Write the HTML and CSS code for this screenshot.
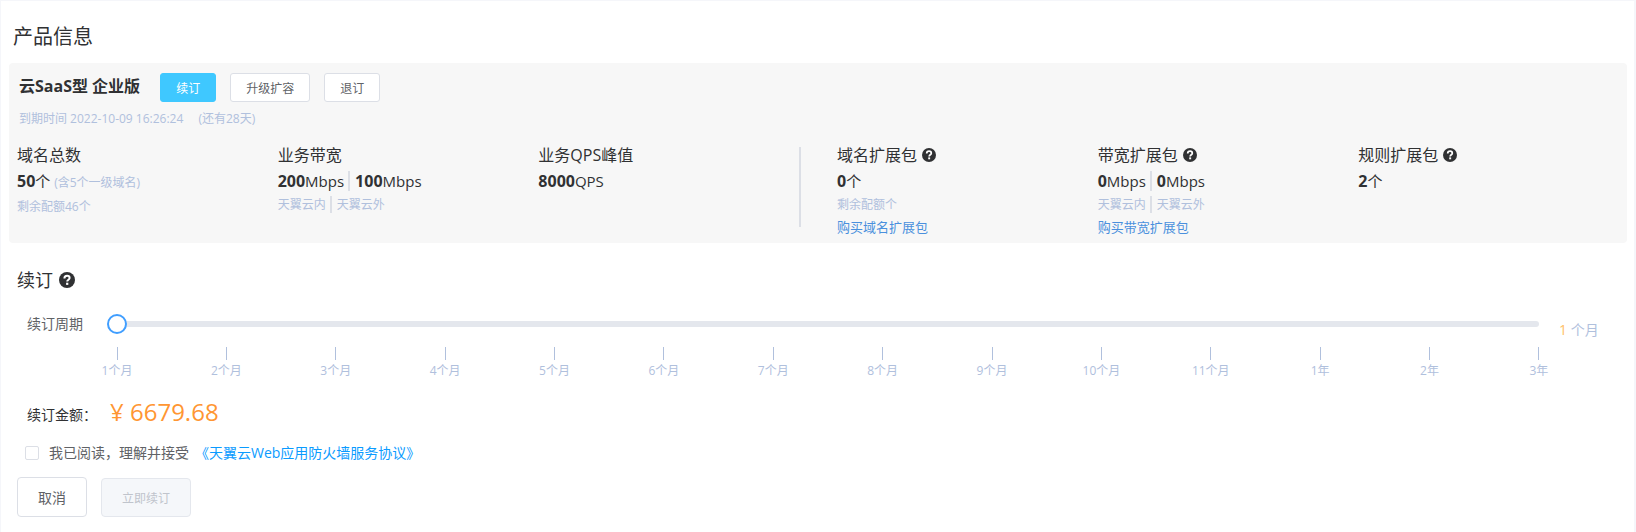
FILE: index.html
```html
<!DOCTYPE html>
<html lang="zh-CN">
<head>
  <meta charset="UTF-8">
  <meta name="viewport" content="width=device-width, initial-scale=1.0">
  <title>产品信息</title>
  <link rel="stylesheet" href="styles.css">
</head>
<body>
  <svg class="sprite" aria-hidden="true">
    <symbol id="icon-help" viewBox="0 0 16 16">
      <circle cx="8" cy="8" r="8" fill="#303133"/>
      <path d="M5.4 6.4C5.4 4.6 6.5 3.7 8.1 3.7s2.5.9 2.5 2.2c0 1.8-2.4 1.8-2.4 3.7" fill="none" stroke="#fff" stroke-width="2"/>
      <rect x="7.1" y="10.7" width="2.2" height="2.2" fill="#fff"/>
    </symbol>
  </svg>

  <main class="page">
    <h1>产品信息</h1>

    <section class="panel">
      <div class="panel-head">
        <h2>云SaaS型 企业版</h2>
        <button class="btn btn-primary" type="button">续订</button>
        <button class="btn" type="button">升级扩容</button>
        <button class="btn" type="button">退订</button>
      </div>
      <p class="expire">到期时间 2022-10-09 16:26:24 <span>(还有28天)</span></p>

      <div class="stats">
        <div class="group">
          <div class="stat">
            <h3>域名总数</h3>
            <p class="value"><b>50</b>个 <small>(含5个一级域名)</small></p>
            <p class="sub">剩余配额46个</p>
          </div>
          <div class="stat">
            <h3>业务带宽</h3>
            <p class="value"><span><b>200</b>Mbps</span><span><b>100</b>Mbps</span></p>
            <p class="sub"><span>天翼云内</span><span>天翼云外</span></p>
          </div>
          <div class="stat">
            <h3>业务QPS峰值</h3>
            <p class="value"><b>8000</b>QPS</p>
          </div>
        </div>
        <div class="divider"></div>
        <div class="group">
          <div class="stat">
            <h3>域名扩展包 <svg class="help"><use href="#icon-help"/></svg></h3>
            <p class="value"><b>0</b>个</p>
            <p class="sub">剩余配额个</p>
            <a href="#">购买域名扩展包</a>
          </div>
          <div class="stat">
            <h3>带宽扩展包 <svg class="help"><use href="#icon-help"/></svg></h3>
            <p class="value"><span><b>0</b>Mbps</span><span><b>0</b>Mbps</span></p>
            <p class="sub"><span>天翼云内</span><span>天翼云外</span></p>
            <a href="#">购买带宽扩展包</a>
          </div>
          <div class="stat">
            <h3>规则扩展包 <svg class="help"><use href="#icon-help"/></svg></h3>
            <p class="value"><b>2</b>个</p>
          </div>
        </div>
      </div>
    </section>

    <form class="renew">
      <h2>续订 <svg class="help help-lg"><use href="#icon-help"/></svg></h2>

      <div class="period">
        <label for="period">续订周期</label>
        <div class="track">
          <input id="period" type="range" min="0" max="13" value="0">
        </div>
        <output for="period"><b>1</b> 个月</output>
        <ul class="marks">
          <li>1个月</li>
          <li>2个月</li>
          <li>3个月</li>
          <li>4个月</li>
          <li>5个月</li>
          <li>6个月</li>
          <li>7个月</li>
          <li>8个月</li>
          <li>9个月</li>
          <li>10个月</li>
          <li>11个月</li>
          <li>1年</li>
          <li>2年</li>
          <li>3年</li>
        </ul>
      </div>

      <p class="amount"><span>续订金额：</span><strong>¥ 6679.68</strong></p>

      <div class="agree">
        <input id="agree" type="checkbox">
        <label for="agree">我已阅读，理解并接受</label>
        <a href="#">《天翼云Web应用防火墙服务协议》</a>
      </div>

      <div class="actions">
        <button class="btn btn-cancel" type="button">取消</button>
        <button class="btn btn-submit" type="submit" disabled>立即续订</button>
      </div>
    </form>
  </main>
</body>
</html>
```

FILE: styles.css
```css
* { box-sizing: border-box; }
body {
  margin: 0;
  padding: 1px 2px 0 1px;
  min-height: 100vh;
  display: flex;
  background: #f5f6fa;
  color: #303133;
  font-family: "Open Sans", "Noto Sans CJK SC", sans-serif;
  font-size: 14px;
}
h1, h2, h3, p, ul {
  margin: 0;
  padding: 0;
  font-weight: normal;
}
a {
  text-decoration: none;
}
button, input {
  font-family: inherit;
  margin: 0;
}
.sprite {
  position: absolute;
  width: 0;
  height: 0;
}
.page {
  flex: 1;
  padding: 22px 7px 14px 8px;
  background: #fff;
}
h1 {
  padding-left: 4px;
  margin-bottom: 12px;
  font-size: 20px;
  line-height: 28px;
}
.help {
  width: 14px;
  height: 14px;
}
.help-lg {
  width: 16px;
  height: 16px;
}

/* 产品面板 */
.panel {
  padding: 10px 8px 3px;
  background: #f7f7f7;
  border-radius: 4px;
}
.panel-head {
  display: flex;
  align-items: center;
  gap: 14px;
  padding-left: 2px;
}
.panel-head h2 {
  margin-right: 6px;
  padding-bottom: 4px;
  font-size: 16px;
  font-weight: bold;
  line-height: 24px;
}
.btn {
  height: 29px;
  padding: 0 15px;
  border: 1px solid #dcdfe6;
  border-radius: 3px;
  background: #fff;
  color: #606266;
  font-size: 12px;
  cursor: pointer;
}
.btn-primary {
  border-color: #3fc8ff;
  background: #3fc8ff;
  color: #fff;
}
.expire {
  margin-top: 7px;
  padding-left: 2px;
  color: #b0c0dd;
  font-size: 12px;
  line-height: 20px;
}
.expire span {
  margin-left: 12px;
}
.stats {
  display: flex;
  margin-top: 14px;
}
.group {
  flex: 1;
  display: grid;
  grid-template-columns: repeat(3, 1fr);
}
.divider {
  width: 2px;
  margin: 4px 36px 13px 0;
  background: #dcdfe6;
}
.stat h3 {
  display: flex;
  align-items: center;
  gap: 5px;
  font-size: 16px;
  line-height: 24px;
}
.value {
  font-size: 15px;
  line-height: 28px;
}
.value b {
  font-size: 16px;
}
.value small {
  color: #b0c0dd;
  font-size: 12px;
}
.sub {
  color: #b0c0dd;
  font-size: 12px;
  line-height: 20px;
}
.value span + span,
.sub span + span {
  margin-left: 4px;
  padding-left: 5px;
  border-left: 2px solid #dcdfe6;
}
.stat a {
  color: #4a90dd;
  font-size: 13px;
  line-height: 25px;
}

/* 续订 */
.renew h2 {
  display: flex;
  align-items: center;
  gap: 6px;
  margin-top: 25px;
  padding-left: 8px;
  font-size: 18px;
  line-height: 24px;
}
.period {
  display: grid;
  grid-template-columns: 90px 1fr 88px;
  align-items: center;
  margin-top: 12px;
  padding-left: 18px;
}
.period label {
  color: #606266;
  line-height: 40px;
}
.track {
  display: flex;
  align-items: center;
  height: 6px;
  border-radius: 3px;
  background: #e4e7ed;
}
.track input {
  flex: 1;
  height: 20px;
  margin: 0 -10px;
  appearance: none;
  background: none;
}
.track input::-webkit-slider-thumb {
  appearance: none;
  width: 20px;
  height: 20px;
  border: 2px solid #409eff;
  border-radius: 50%;
  background: #fff;
}
.period output {
  padding: 10px 0 0 20px;
  color: #b0c0dd;
}
.period output b {
  color: #ffc069;
  font-weight: normal;
}
.marks {
  grid-column: 2;
  display: flex;
  justify-content: space-between;
  margin-top: 3px;
  list-style: none;
}
.marks li {
  display: flex;
  flex-direction: column;
  align-items: center;
  gap: 1px;
  width: 0;
  color: #b0c0dd;
  font-size: 12px;
  line-height: 20px;
  white-space: nowrap;
}
.marks li::before {
  content: "";
  width: 1px;
  height: 13px;
  background: #b0c0dd;
}
.amount {
  display: flex;
  align-items: center;
  margin-top: 11px;
  padding-left: 18px;
  line-height: 34px;
}
.amount span {
  width: 83px;
  padding-top: 6px;
}
.amount strong {
  color: #ff9632;
  font-size: 24px;
  font-weight: normal;
}
.agree {
  display: flex;
  align-items: center;
  margin-top: 11px;
  padding-left: 16px;
  color: #606266;
  line-height: 20px;
}
.agree input {
  width: 14px;
  height: 14px;
  margin-right: 10px;
  appearance: none;
  border: 1px solid #dcdfe6;
  border-radius: 2px;
  background: #fff;
}
.agree input:checked {
  background: #409eff;
}
.agree a {
  margin-left: 6px;
  color: #0a9bff;
}
.actions {
  display: flex;
  align-items: flex-end;
  gap: 14px;
  margin-top: 14px;
  padding-left: 8px;
}
.btn-cancel {
  height: 40px;
  padding: 0 20px;
  border-radius: 4px;
  font-size: 14px;
}
.btn-submit {
  height: 39px;
  padding: 0 20px;
  border-color: #e4e7ed;
  border-radius: 4px;
  background: #f5f7fa;
  color: #c0c4cc;
  cursor: not-allowed;
}
```
